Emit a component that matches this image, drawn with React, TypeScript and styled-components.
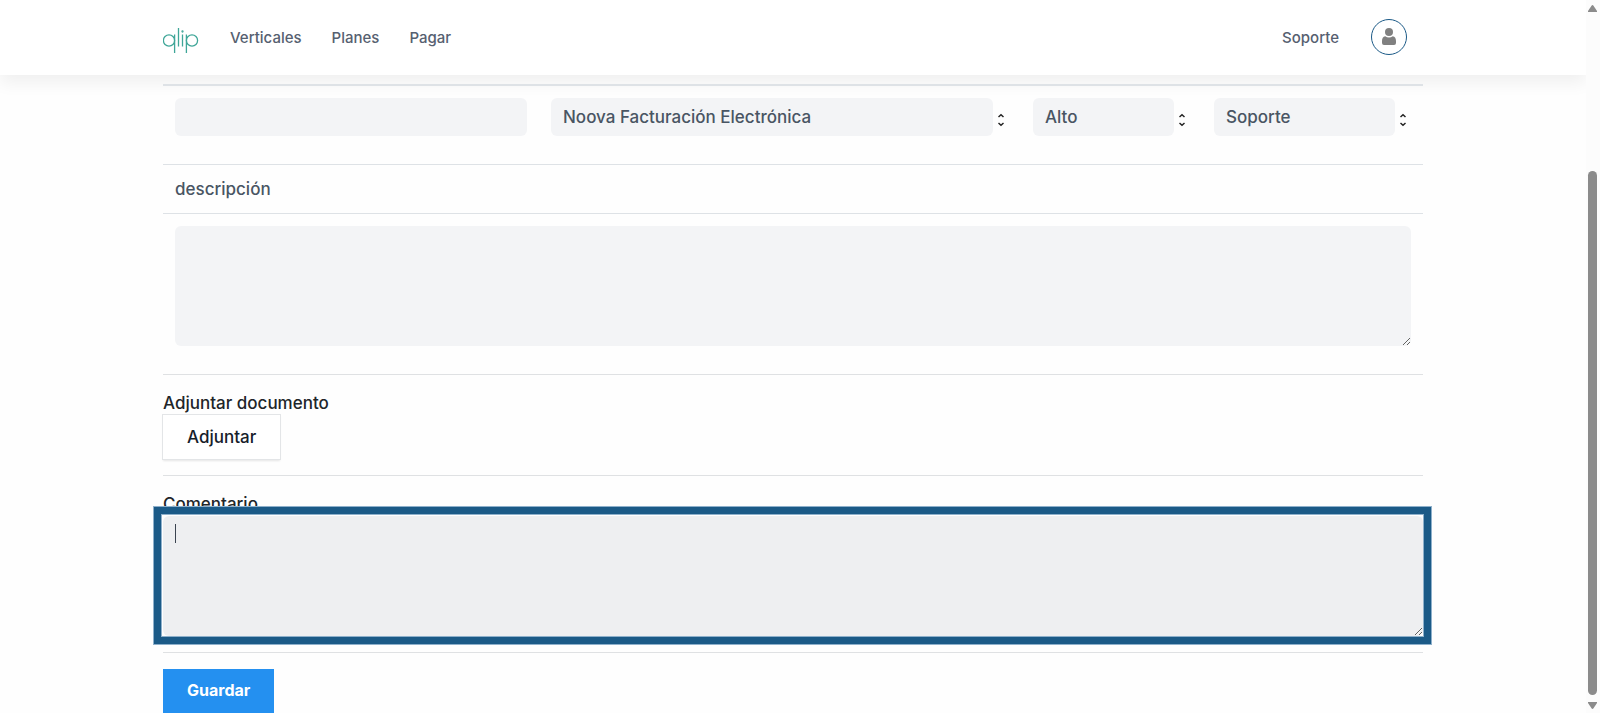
import React from "react";
import styled, { createGlobalStyle } from "styled-components";

const GlobalStyle = createGlobalStyle`
  *, *::before, *::after { box-sizing: border-box; }
  html, body { margin: 0; height: 100%; }
  #root { height: 100%; }
  body {
    background: #fefefe;
    color: #212529;
    font-family: Inter, "Liberation Sans", sans-serif;
    font-size: 17px;
    font-weight: 500;
    line-height: 24px;
  }
  button, input, select, textarea { font: inherit; color: inherit; }
`;

const Viewport = styled.div`
  display: flex;
  height: 100vh;
  overflow: hidden;
`;

const Page = styled.div`
  flex: 1;
  min-width: 0;
  display: flex;
  flex-direction: column;
`;

const Header = styled.header`
  flex: none;
  background: #fff;
  box-shadow: 0 8px 16px rgba(0, 0, 0, 0.06);
`;

const Container = styled.div`
  width: 100%;
  max-width: 1260px;
  margin: 0 auto;
`;

const HeaderBar = styled(Container)`
  display: flex;
  align-items: center;
  height: 75px;
  padding: 0 16px 2px 0;
`;

const LogoLink = styled.a`
  display: flex;
  padding-top: 7px;
  margin-right: 16px;
`;

const Nav = styled.nav`
  flex: 1;
  display: flex;
`;

const NavLink = styled.a<{ $end?: boolean }>`
  padding: 9px 15px 7px;
  margin-left: ${(p) => (p.$end ? "auto" : "0")};
  color: #566070;
  font-size: 15px;
  line-height: 20px;
  text-decoration: none;
`;

const Avatar = styled.button`
  display: flex;
  align-items: center;
  justify-content: center;
  width: 36px;
  height: 36px;
  margin-left: 17px;
  padding: 0;
  border: 1px solid #1b5a87;
  border-radius: 50%;
  background: #fff;
`;

const Form = styled.form`
  display: block;
  padding-top: 9px;
`;

const FieldRow = styled.div`
  display: grid;
  grid-template-columns: 376fr 482fr 181fr 221fr;
  height: 80px;
  border-top: 2px solid #dee2e6;
`;

const Cell = styled.div`
  min-width: 0;
  padding: 12px;
`;

const SelectWrap = styled.div`
  display: flex;
  align-items: center;
`;

const TextInput = styled.input`
  display: block;
  width: 100%;
  height: 38px;
  padding: 0 12px;
  border: 0;
  border-radius: 6px;
  background: #f3f4f6;
`;

const Select = styled.select`
  flex: 1;
  min-width: 0;
  height: 38px;
  padding: 0 12px;
  border: 0;
  border-radius: 6px;
  background: #f3f4f6;
  color: #495563;
  appearance: none;
`;

const Arrows = styled.svg`
  flex: none;
  width: 16px;
  height: 14px;
  margin-top: 6px;
`;

const DescriptionLabel = styled.label`
  display: block;
  height: 49px;
  padding: 12px;
  border-top: 1px solid #dee2e6;
  color: #495563;
`;

const DescriptionCell = styled.div`
  padding: 12px 12px 28px;
  border-top: 1px solid #dee2e6;
`;

const TextArea = styled.textarea<{ $active?: boolean }>`
  display: block;
  width: 100%;
  height: 120px;
  padding: 6px 12px;
  border: 0;
  border-radius: 6px;
  outline: 0;
  background: ${(p) => (p.$active ? "#eeeff1" : "#f3f4f6")};
  caret-color: transparent;
`;

const Section = styled.section`
  padding: 16px 0;
  border-top: 1px solid #dfe1e3;
`;

const Label = styled.label`
  display: block;
`;

const AttachButton = styled.button`
  display: block;
  height: 44px;
  padding: 0 24px;
  border: 0;
  background: #fff;
  color: #16202a;
  box-shadow: 0 0 0 1px #e3e5e7, 0 2px 2px rgba(0, 0, 0, 0.1);
`;

const CommentBox = styled.div`
  position: relative;
`;

const Highlight = styled.div`
  position: absolute;
  inset: -10px -9px -9px -10px;
  border: 1px solid #8eb0cb;
  box-shadow: inset 0 0 0 7px #1b5a87, inset 0 0 0 8px #8eb0cb;
  pointer-events: none;
`;

const Caret = styled.span`
  position: absolute;
  top: 8px;
  left: 12px;
  width: 1px;
  height: 19px;
  background: #3b4450;
`;

const SaveButton = styled.button`
  display: block;
  height: 46px;
  padding: 0 24px 4px;
  border: 0;
  background: #2490f0;
  color: #fff;
  font-size: 16px;
  font-weight: 700;
`;

const ScrollRail = styled.div`
  flex: none;
  display: flex;
  flex-direction: column;
  align-items: center;
  width: 14px;
  padding: 5px 1px 4px 0;
  background: #fcfcfc;
`;

const ScrollArrow = styled.svg`
  flex: none;
  width: 9px;
  height: 7px;
`;

const ScrollTrack = styled.div`
  flex: 1;
  display: grid;
  grid-template-rows: 23fr 76fr;
  padding-bottom: 7px;
`;

const ScrollThumb = styled.div`
  grid-row: 2;
  width: 9px;
  border-radius: 5px;
  background: #8b8b8b;
`;

const Logo = () => (
  <svg width="36" height="25" viewBox="0 0 36 25" fill="none" stroke="#3fa698" strokeWidth="1.3" aria-label="qlip">
    <circle cx="6" cy="12.5" r="5.6" />
    <line x1="11.6" y1="6.5" x2="11.6" y2="25" />
    <line x1="15.5" y1="0" x2="15.5" y2="18.5" />
    <line x1="19.5" y1="6.5" x2="19.5" y2="18.5" />
    <circle cx="19.5" cy="3.5" r="0.5" />
    <line x1="23.4" y1="6.5" x2="23.4" y2="25" />
    <circle cx="29" cy="12.5" r="5.6" />
  </svg>
);

const UserIcon = () => (
  <svg width="14" height="17" viewBox="0 0 14 17" fill="#808080" aria-hidden="true">
    <circle cx="7" cy="4" r="4" />
    <path d="M3.2 8.2 C5.5 9.8 8.5 9.8 10.8 8.2 C13 8.6 14 10.2 14 13 V15 Q14 17 12 17 H2 Q0 17 0 15 V13 C0 10.2 1 8.6 3.2 8.2 Z" />
  </svg>
);

type DropDownProps = { label: string; options: string[] };

const DropDown = ({ label, options }: DropDownProps) => (
  <Cell>
    <SelectWrap>
      <Select aria-label={label}>
        {options.map((o) => (
          <option key={o}>{o}</option>
        ))}
      </Select>
      <Arrows viewBox="0 0 16 14" fill="none" stroke="#222" strokeWidth="1.5" aria-hidden="true">
        <path d="M5.5 4 L8 1.8 L10.5 4 M5.5 10 L8 12.2 L10.5 10" />
      </Arrows>
    </SelectWrap>
  </Cell>
);

export default function App() {
  return (
    <Viewport>
      <GlobalStyle />
      <Page>
        <Header>
          <HeaderBar>
            <LogoLink href="#">
              <Logo />
            </LogoLink>
            <Nav>
              <NavLink href="#">Verticales</NavLink>
              <NavLink href="#">Planes</NavLink>
              <NavLink href="#">Pagar</NavLink>
              <NavLink href="#" $end>Soporte</NavLink>
            </Nav>
            <Avatar type="button" aria-label="Cuenta">
              <UserIcon />
            </Avatar>
          </HeaderBar>
        </Header>
        <Container>
          <Form>
            <FieldRow>
              <Cell>
                <TextInput type="text" aria-label="Asunto" />
              </Cell>
              <DropDown label="Producto" options={["Noova Facturación Electrónica"]} />
              <DropDown label="Prioridad" options={["Alto"]} />
              <DropDown label="Área" options={["Soporte"]} />
            </FieldRow>
            <DescriptionLabel htmlFor="descripcion">descripción</DescriptionLabel>
            <DescriptionCell>
              <TextArea id="descripcion" />
            </DescriptionCell>
            <Section>
              <Label htmlFor="adjuntar">Adjuntar documento</Label>
              <AttachButton id="adjuntar" type="button">Adjuntar</AttachButton>
            </Section>
            <Section>
              <Label htmlFor="comentario">Comentario</Label>
              <CommentBox>
                <TextArea id="comentario" $active />
                <Highlight />
                <Caret />
              </CommentBox>
            </Section>
            <Section>
              <SaveButton type="submit">Guardar</SaveButton>
            </Section>
          </Form>
        </Container>
      </Page>
      <ScrollRail aria-hidden="true">
        <ScrollArrow viewBox="0 0 9 7" fill="#8b8b8b">
          <path d="M3.5 0.8 Q4.5 -0.6 5.5 0.8 L9 6 V7 H0 V6 Z" />
        </ScrollArrow>
        <ScrollTrack>
          <ScrollThumb />
        </ScrollTrack>
        <ScrollArrow viewBox="0 0 9 7" fill="#8b8b8b">
          <path d="M3.5 6.2 Q4.5 7.6 5.5 6.2 L9 1 V0 H0 V1 Z" />
        </ScrollArrow>
      </ScrollRail>
    </Viewport>
  );
}
